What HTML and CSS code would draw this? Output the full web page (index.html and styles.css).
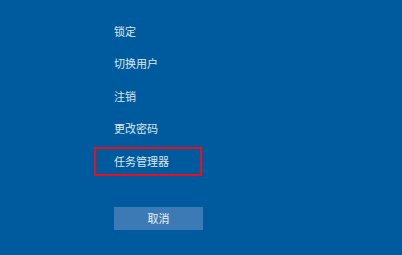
FILE: index.html
```html
<!DOCTYPE html>
<html lang="zh-CN">
<head>
<meta charset="utf-8">
<link rel="stylesheet" href="styles.css">
</head>
<body>
<div class="screen">
  <ul class="menu">
    <li class="item">锁定</li>
    <li class="item">切换用户</li>
    <li class="item">注销</li>
    <li class="item">更改密码</li>
    <li class="item selected">任务管理器</li>
  </ul>
  <button class="cancel">取消</button>
</div>
</body>
</html>
```
FILE: styles.css
```css
html, body {
  margin: 0;
  padding: 0;
  background: #005a9e;
}
.screen {
  width: 402px;
  height: 255px;
  box-sizing: border-box;
  padding: 17px 0 0 94px;
  display: flex;
  flex-direction: column;
  align-items: flex-start;
  font-family: "Noto Sans CJK SC", "Microsoft YaHei", sans-serif;
  font-size: 11px;
  color: #dde8f2;
}
.menu {
  list-style: none;
  margin: 0;
  padding: 0;
  display: flex;
  flex-direction: column;
  gap: 3.4px;
}
.item {
  box-sizing: border-box;
  width: 108px;
  height: 29px;
  border: 2px solid transparent;
  padding-left: 18px;
  display: flex;
  align-items: center;
  line-height: 1;
}
.item.selected {
  border-color: #e8101e;
}
.cancel {
  margin: 31.5px 0 0 20px;
  width: 89px;
  height: 23px;
  border: none;
  padding: 0;
  background: #3b7ab4;
  color: #eef3f8;
  font-family: inherit;
  font-size: 11px;
  line-height: 1;
}
```
